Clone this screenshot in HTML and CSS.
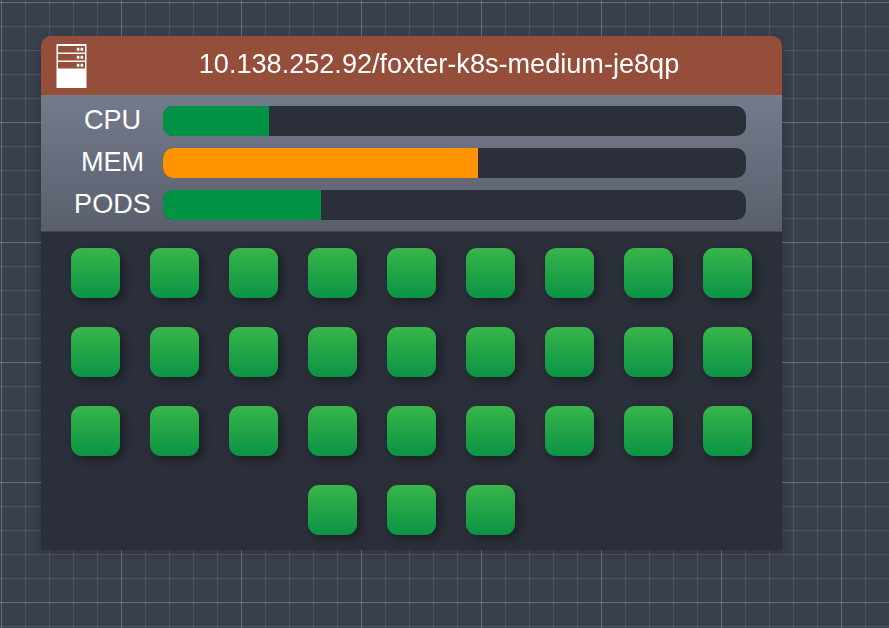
FILE: index.html
```html
<!DOCTYPE html>
<html lang="en">
<head>
    <meta charset="UTF-8">
    <title>Node</title>
    <link rel="stylesheet" href="styles.css">
</head>
<body>

<div class="grid-lines"></div>

<div class="node">
    <div class="node-header">
        <svg class="server-icon" width="31" height="44" viewBox="0 0 31 44">
            <path fill="#fff" fill-rule="evenodd" d="M.5 0H30.5V44H.5ZM2 2V8.6H29V2ZM2 10V16.6H29V10ZM2 18V24.6H29V18Z"/>
            <path fill="#fff" d="M20.8 3.8h2.6v3h-2.6zM24.6 3.8h2.6v3h-2.6zM20.8 11.8h2.6v3h-2.6zM24.6 11.8h2.6v3h-2.6zM20.8 19.8h2.6v3h-2.6zM24.6 19.8h2.6v3h-2.6z"/>
        </svg>
        <div class="node-title">10.138.252.92/foxter-k8s-medium-je8qp</div>
    </div>

    <div class="metrics">
        <div class="metric">
            <div class="metric-label">CPU</div>
            <div class="bar"><div class="bar-fill ok" style="width: 18.1%"></div></div>
        </div>
        <div class="metric">
            <div class="metric-label">MEM</div>
            <div class="bar"><div class="bar-fill warn" style="width: 54%"></div></div>
        </div>
        <div class="metric">
            <div class="metric-label">PODS</div>
            <div class="bar"><div class="bar-fill ok" style="width: 27.1%"></div></div>
        </div>
    </div>

    <div class="pods">
        <div class="pod"></div><div class="pod"></div><div class="pod"></div>
        <div class="pod"></div><div class="pod"></div><div class="pod"></div>
        <div class="pod"></div><div class="pod"></div><div class="pod"></div>
        <div class="pod"></div><div class="pod"></div><div class="pod"></div>
        <div class="pod"></div><div class="pod"></div><div class="pod"></div>
        <div class="pod"></div><div class="pod"></div><div class="pod"></div>
        <div class="pod"></div><div class="pod"></div><div class="pod"></div>
        <div class="pod"></div><div class="pod"></div><div class="pod"></div>
        <div class="pod"></div><div class="pod"></div><div class="pod"></div>
        <div class="pod"></div><div class="pod"></div><div class="pod"></div>
    </div>
</div>

</body>
</html>
```

FILE: styles.css
```css
html, body {
    height: 100%;
}
body {
    margin: 0;
    overflow: hidden;
    font-family: "Liberation Sans", Arial, sans-serif;
    color: #fff;
    background-color: #3a414c;
    padding: 36px 0 0 41px;
    box-sizing: border-box;
}
/* grid sits above the card's shadow but under the card itself */
.grid-lines {
    position: fixed;
    inset: 0;
    z-index: 1;
    background-image:
        linear-gradient(rgba(255, 255, 255, 0.15) 1px, transparent 1px),
        linear-gradient(90deg, rgba(255, 255, 255, 0.15) 1px, transparent 1px),
        linear-gradient(rgba(255, 255, 255, 0.1) 1px, transparent 1px),
        linear-gradient(90deg, rgba(255, 255, 255, 0.1) 1px, transparent 1px);
    background-size: 120px 120px, 120px 120px, 24px 24px, 24px 24px;
    background-position: 0 2px, 1px 0, 0 2px, 1px 0;
}
.node {
    width: 741px;
    border-radius: 10px 10px 0 0;
    box-shadow: 0 3px 10px rgba(43, 47, 58, 0.8);
}
.node-header, .metrics, .pods {
    position: relative;
    z-index: 2;
}
.node-header {
    display: flex;
    align-items: center;
    height: 59px;
    padding-left: 15px;
    box-sizing: border-box;
    background-color: #954e3a;
    border-radius: 10px 10px 0 0;
}
.server-icon {
    flex: none;
    margin-top: 1px;
}
.node-title {
    flex: 1;
    text-align: center;
    font-size: 27.1px;
    line-height: 56px;
    padding-bottom: 3px;
    margin-left: 9px;
}
.metrics {
    display: flex;
    flex-direction: column;
    gap: 12px;
    height: 137px;
    padding: 11px 36px 0 0;
    box-sizing: border-box;
    border-bottom: 1px solid #454955;
    background: linear-gradient(#747b8b, #5a5f6d);
}
.metric {
    display: flex;
    align-items: center;
}
.metric-label {
    flex: none;
    width: 83px;
    margin: 0 9px 0 30px;
    text-align: center;
    white-space: nowrap;
    font-size: 27.1px;
    line-height: 28px;
    padding-bottom: 2px;
}
.bar {
    flex: 1;
    height: 30px;
    border-radius: 10px;
    background-color: #2b2f3a;
    overflow: hidden;
}
.bar-fill {
    height: 100%;
}
.ok {
    background-color: #009444;
}
.warn {
    background-color: #ff9300;
}
.pods {
    display: flex;
    flex-wrap: wrap;
    justify-content: center;
    gap: 29.4px;
    padding: 16.3px 15px 15px;
    background-color: #2b2f3a;
}
.pod {
    width: 49.6px;
    height: 49.6px;
    border-radius: 11px;
    background: linear-gradient(#39b54a, #0a9444);
    box-shadow: 4px 4px 10px rgba(0, 0, 0, 0.35);
}
```
